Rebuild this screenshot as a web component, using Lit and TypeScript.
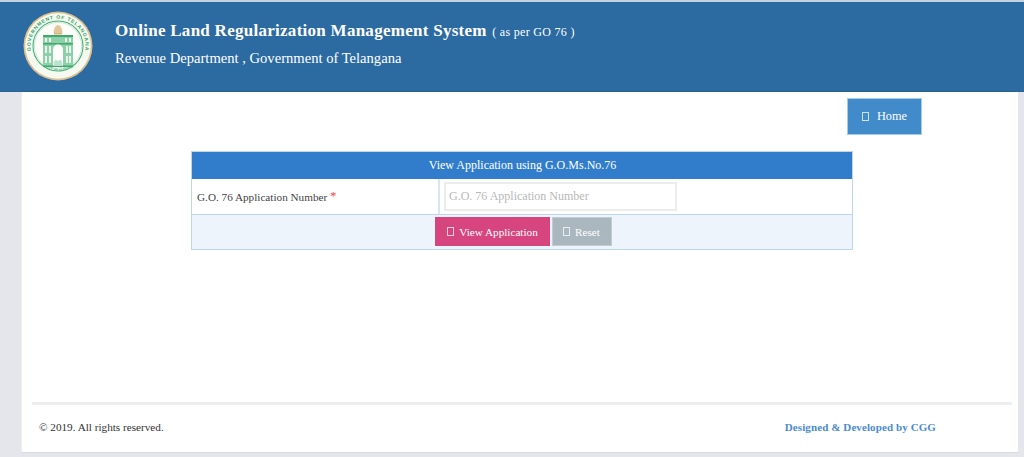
import { LitElement, html, css, svg } from 'lit';
import { customElement } from 'lit/decorators.js';

const emblem = svg`
  <svg class="emblem" viewBox="0 0 70 70" width="70" height="70">
    <defs>
      <path id="arc-top" d="M10.600 48a27.500 27.500 0 1 1 48.800 0" />
      <path id="arc-bottom" d="M11 47a30 30 0 0 0 48 0" />
    </defs>
    <circle cx="35" cy="35" r="34.500" fill="#dcc08f" />
    <circle cx="35" cy="35" r="32.800" fill="#f5f9f0" />
    <circle cx="35" cy="35" r="25" fill="#fcfdf9" stroke="#46b077" stroke-width="1.100" />
    <circle cx="35" cy="35" r="23.600" fill="none" stroke="#a9dcbd" stroke-width="0.600" />
    <text font-family="'Liberation Sans', sans-serif" font-size="5" font-weight="700" fill="#3aa56a" letter-spacing="0.800">
      <textPath href="#arc-top" startOffset="50%" text-anchor="middle">GOVERNMENT OF TELANGANA</textPath>
    </text>
    <text font-family="'Noto Sans', sans-serif" font-size="4.400" fill="#5cb985" letter-spacing="0.300">
      <textPath href="#arc-bottom" startOffset="50%" text-anchor="middle">తెలంగాణ ప్రభుత్వం</textPath>
    </text>
    <path d="M30.500 22c0-4 2-8 4.500-8s4.500 4 4.500 8z" fill="#e3c79b" />
    <rect x="31" y="22" width="8" height="1.500" fill="#d4b283" />
    <path d="M20 24h30v32h-30z" fill="#8fd0aa" />
    <path d="M20 24h30v2h-30zM20 32h30v1.500h-30zM20 54.500h30v1.500h-30z" fill="#3da96d" />
    <path d="M22 27h2v4h-2zM26 27h2v4h-2zM42 27h2v4h-2zM46 27h2v4h-2zM22 35h2v7h-2zM26 35h2v7h-2zM43 35h2v7h-2zM46 35h2v7h-2zM22 45h2v7h-2zM26 45h2v7h-2zM43 45h2v7h-2zM46 45h2v7h-2z" fill="#e4f4ea" />
    <path d="M30 54.500v-16a5 5 0 0 1 10 0v16z" fill="#fdfefb" />
    <path d="M31 54.500v-4l2-2 2 2 2-2 2 2v4z" fill="#b9e3ca" />
  </svg>
`;

@customElement('app-root')
export class AppRoot extends LitElement {
  static styles = css`
    :host {
      display: block;
      height: 457px;
      overflow: hidden;
      background: #e4e6eb;
      font-family: 'Liberation Serif', 'Times New Roman', serif;
      font-size: 12px;
      color: #333;
    }
    .top {
      display: flex;
      align-items: center;
      box-sizing: border-box;
      height: 92px;
      padding: 0 0 1px 23px;
      background: #2c6aa2;
      border-top: 2px solid #c4d3e0;
      border-bottom: 1px solid #2a6294;
      color: #fff;
    }
    .emblem { display: block; flex: none; }
    .brand { margin: -4px 0 0 22px; }
    .title {
      font-size: 17px;
      font-weight: 700;
      letter-spacing: 0.27px;
      line-height: 20px;
    }
    .title small {
      font-size: 12px;
      font-weight: 400;
      letter-spacing: 0.3px;
      margin-left: 1px;
    }
    .sub {
      margin-top: 7px;
      font-size: 14.600px;
      line-height: 18px;
    }
    .page {
      box-sizing: border-box;
      height: 361px;
      margin: 0 6px 4px 21px;
      padding: 6px 6px 0 10px;
      background: #fff;
      border-left: 1px solid #eceef1;
      border-bottom: 1px solid #d9dbdf;
      display: flex;
      flex-direction: column;
    }
    .actions {
      display: flex;
      justify-content: flex-end;
      padding-right: 90px;
    }
    .btn {
      display: inline-flex;
      align-items: center;
      justify-content: center;
      box-sizing: border-box;
      border: 1px solid transparent;
      color: #fff;
      font: inherit;
      padding: 0;
    }
    .tofu {
      display: inline-block;
      box-sizing: border-box;
      width: 7px;
      height: 9px;
      border: 1px solid rgba(255, 255, 255, 0.75);
    }
    .home {
      width: 75px;
      height: 37px;
      gap: 8px;
      background: #428bca;
      border-color: #a3cbea;
      font-size: 12.300px;
    }
    .panel {
      box-sizing: border-box;
      width: 662px;
      margin: 16px 0 0 159px;
      border: 1px solid #bcd6ec;
    }
    .panel-head {
      height: 27px;
      padding-left: 1px;
      background: #317dcb;
      color: #fff;
      font-size: 12px;
      line-height: 27px;
      text-align: center;
    }
    .row {
      display: grid;
      grid-template-columns: 248px 1fr;
      height: 36px;
      box-sizing: border-box;
      border-bottom: 1px solid #bcd6ec;
    }
    .row label {
      display: flex;
      align-items: center;
      padding-left: 5px;
      border-right: 2px solid #d6e6f3;
      font-size: 11.200px;
      color: #444;
    }
    .req { color: #f33; margin-left: 3px; font-size: 12px; }
    .field { padding: 3px 0 0 4px; }
    input {
      display: block;
      box-sizing: border-box;
      width: 233px;
      height: 29px;
      padding: 0 3px;
      border: 2px solid #ececec;
      border-radius: 0;
      outline: none;
      font-family: inherit;
      font-size: 12px;
      background: #fff;
    }
    input::placeholder { color: #b8b8b8; opacity: 1; }
    .submit {
      display: flex;
      justify-content: center;
      gap: 2px;
      height: 34px;
      padding: 2px 0 0 2px;
      box-sizing: border-box;
      background: #edf4fb;
    }
    .submit .btn { height: 29px; gap: 5px; font-size: 11.200px; }
    .view { width: 115px; padding-left: 1px; background: #d6457e; }
    .reset { width: 60px; background: #abb7be; border-color: #c2ccd2; }
    .foot {
      margin-top: 152px;
      border-top: 3px solid #eeeeee;
      display: flex;
      justify-content: space-between;
      padding: 16px 76px 0 7px;
      font-size: 11.200px;
      line-height: 13px;
    }
    .credit {
      color: #4a8bd0;
      font-size: 11px;
      font-weight: 700;
      letter-spacing: 0.1px;
    }
  `;

  render() {
    return html`
      <header class="top">
        ${emblem}
        <div class="brand">
          <div class="title">Online Land Regularization Management System <small>( as per GO 76 )</small></div>
          <div class="sub">Revenue Department , Government of Telangana</div>
        </div>
      </header>
      <main class="page">
        <div class="actions">
          <button class="btn home"><span class="tofu"></span>Home</button>
        </div>
        <section class="panel">
          <div class="panel-head">View Application using G.O.Ms.No.76</div>
          <div class="row">
            <label>G.O. 76 Application Number <span class="req">*</span></label>
            <div class="field"><input placeholder="G.O. 76 Application Number" /></div>
          </div>
          <div class="submit">
            <button class="btn view"><span class="tofu"></span>View Application</button>
            <button class="btn reset"><span class="tofu"></span>Reset</button>
          </div>
        </section>
        <footer class="foot">
          <span>© 2019. All rights reserved.</span>
          <span class="credit">Designed &amp; Developed by CGG</span>
        </footer>
      </main>
    `;
  }
}
